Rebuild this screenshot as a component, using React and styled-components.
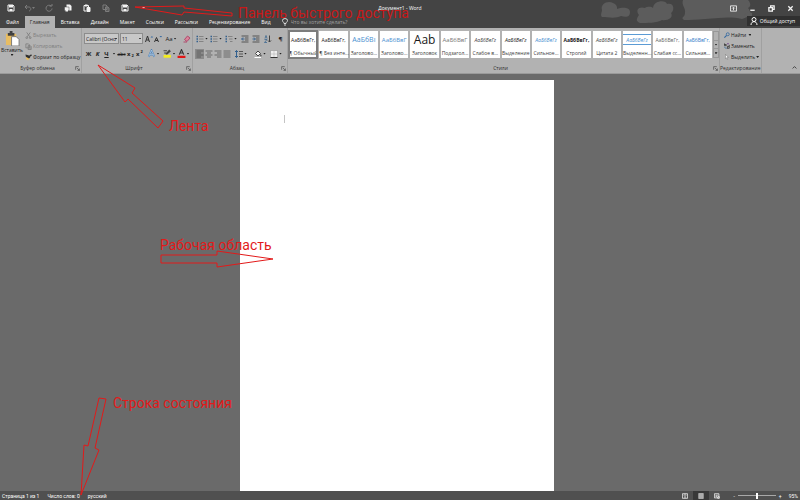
import styled, { createGlobalStyle, css } from "styled-components";

const GlobalStyle = createGlobalStyle`
  * {
    box-sizing: border-box;
  }

  body {
    margin: 0;
    background: #6a6a6a;
    font-family: "Open Sans", "Noto Sans", sans-serif;
    font-size: 5px;
    line-height: 8px;
    color: #202020;
  }

  button, input, select {
    font: inherit;
    color: inherit;
    margin: 0;
    padding: 0;
    border: 0;
    background: none;
  }
`;

const Window = styled.div`
  position: relative;
  display: flex;
  flex-direction: column;
  min-height: 100vh;
  overflow: hidden;
`;

/* Title bar and tabs */

const Header = styled.header`
  position: relative;
  background: #444;
  color: #fff;
`;

const Clouds = styled.svg`
  position: absolute;
  top: 0;
  right: 48px;
  width: 152px;
  height: 28px;
  fill: #5c5c5c;
`;

const TitleBar = styled.div`
  position: relative;
  display: grid;
  grid-template-columns: 1fr auto 1fr;
  align-items: center;
  height: 16px;
`;

const QuickAccess = styled.div`
  display: flex;
  align-items: center;
  padding-left: 1px;
`;

const BarButton = styled.button`
  display: flex;
  align-items: center;
  justify-content: center;
  width: 19px;
  height: 14px;
  color: ${(props) => (props.$dim ? "#7c7c7c" : "#f4f4f4")};
`;

const Title = styled.h1`
  margin: 0;
  font-size: 5px;
  font-weight: normal;
`;

const WindowButtons = styled.div`
  display: flex;
  justify-content: flex-end;
`;

const TabRow = styled.nav`
  position: relative;
  display: flex;
  align-items: stretch;
  gap: 1px;
  height: 12px;
  padding-left: 1px;
`;

const Tab = styled.button`
  padding: 0 5px;
  white-space: nowrap;
  ${(props) =>
    props.$active &&
    css`
      background: #b2b2b2;
      color: #262626;
    `}
`;

const TellMe = styled.label`
  display: flex;
  flex: 1;
  align-items: center;
  gap: 2px;
  padding-left: 4px;

  input {
    flex: 1;
    min-width: 0;
  }

  input::placeholder {
    color: #a0a0a0;
    opacity: 1;
  }
`;

const Share = styled.button`
  display: flex;
  align-items: center;
  gap: 2px;
  height: 10px;
  padding: 0 5px 0 3px;
  background: #303030;
  white-space: nowrap;
`;

/* Ribbon */

const Ribbon = styled.div`
  display: flex;
  height: 46px;
  background: #b2b2b2;
  border-bottom: 1px solid #9a9a9a;
`;

const GroupBox = styled.section`
  display: flex;
  flex-direction: column;
  flex: ${(props) => (props.$width ? `0 0 ${props.$width}px` : "1")};
  min-width: 0;
  padding-top: 3px;
  border-right: 1px solid #a0a0a0;
`;

const GroupBody = styled.div`
  flex: 1;
  display: flex;
  min-height: 0;
`;

const GroupFooter = styled.footer`
  display: flex;
  align-items: center;
  height: 10px;
  padding-right: 1px;
  color: #303030;

  span {
    flex: 1;
    text-align: center;
    white-space: nowrap;
  }
`;

const Launcher = styled.button`
  display: flex;
  width: 5px;
  color: #404040;
`;

const PasteButton = styled.button`
  display: flex;
  flex-direction: column;
  align-items: center;
  width: 24px;
`;

const CommandList = styled.div`
  display: flex;
  flex-direction: column;
  gap: 3px;
  padding-left: ${(props) => props.$indent || 0}px;
`;

const Command = styled.button`
  display: flex;
  align-items: center;
  gap: 1px;
  height: 8px;
  white-space: nowrap;
  color: ${(props) => (props.$dim ? "#808080" : "#202020")};
`;

const Rows = styled.div`
  flex: 1;
  display: flex;
  flex-direction: column;
  gap: 4px;
  padding: 2px 2px 0;
`;

const Row = styled.div`
  display: flex;
  align-items: center;
  height: 11px;
`;

const Select = styled.select`
  appearance: none;
  width: ${(props) => props.$width}px;
  height: 11px;
  padding: 0 1px;
  margin-right: 1px;
  border: 1px solid #8c8c8c;
  background: #c8c8c8
    linear-gradient(#444, #444) no-repeat right 1px center / 2px 1px;
`;

const Tool = styled.button`
  display: flex;
  align-items: center;
  justify-content: center;
  gap: 1px;
  width: ${(props) => props.$width || 9}px;
  height: 10px;
  font-size: ${(props) => props.$size || 6}px;
  font-weight: ${(props) => (props.$bold ? "bold" : "normal")};
  font-style: ${(props) => (props.$italic ? "italic" : "normal")};
  text-decoration: ${(props) => props.$line || "none"};
  background: ${(props) => (props.$on ? "#8a8a8a" : "none")};

  sup, sub {
    font-size: 4px;
    line-height: 0;
  }

  sup {
    padding-bottom: 4px;
  }

  sub {
    padding-top: 4px;
  }
`;

const Caret = styled.i`
  flex: none;
  width: 3px;
  height: 2px;
  background: currentColor;
  clip-path: polygon(0 0, 100% 0, 50% 100%);
`;

const Gallery = styled.div`
  flex: 1;
  display: flex;
  gap: 2px;
  min-width: 0;
  height: 28px;
  padding: 0 1px;
`;

const StyleCard = styled.button`
  flex: 1 1 0;
  display: flex;
  flex-direction: column;
  justify-content: space-between;
  min-width: 0;
  height: 27px;
  padding: 1px 0;
  background: #fff;
  outline: ${(props) => (props.$active ? "2px solid #7c7c7c" : "none")};
  outline-offset: -1px;
`;

const Sample = styled.span`
  display: flex;
  align-items: center;
  justify-content: center;
  width: 100%;
  height: 16px;
  white-space: nowrap;
  font-size: ${(props) => props.$size || 5}px;
  font-weight: ${(props) => props.$weight || 500};
  font-style: ${(props) => (props.$italic ? "italic" : "normal")};
  color: ${(props) => props.$color || "#181818"};
  ${(props) =>
    props.$ruled &&
    css`
      border: solid #5b9bd5;
      border-width: 1px 0;
      height: 11px;
      margin-top: 2px;
    `}
`;

const StyleName = styled.span`
  width: 100%;
  white-space: nowrap;
  text-align: center;
  color: #404040;
`;

const GalleryScroll = styled.div`
  display: flex;
  flex-direction: column;
  width: 6px;
  height: 27px;
  border: 1px solid #989898;

  button {
    flex: 1;
    display: flex;
    align-items: center;
    justify-content: center;
  }

  button + button {
    border-top: 1px solid #989898;
  }
`;

const RibbonEnd = styled.div`
  flex: 0 0 38px;
  display: flex;
  align-items: flex-end;
  justify-content: flex-end;
  padding: 3px;
`;

/* Document */

const Workspace = styled.main`
  flex: 1;
  display: flex;
  justify-content: center;
  padding: 6px 7px 0 0;
  background: #6a6a6a;
`;

const Sheet = styled.article`
  width: 314px;
  padding: 35px 44px;
  background: #fff;
`;

const TextCursor = styled.div`
  width: 1px;
  height: 8px;
  background: #c4c4c4;
`;

/* Status bar */

const StatusBar = styled.footer`
  display: flex;
  align-items: center;
  gap: 8px;
  height: 9px;
  padding: 0 2px;
  background: #505050;
  color: #fff;
  font-family: Roboto, "Liberation Sans", sans-serif;
`;

const ViewButtons = styled.div`
  display: flex;
  margin-left: auto;
`;

const ViewButton = styled.button`
  display: flex;
  align-items: center;
  justify-content: center;
  width: 16px;
  height: 9px;
  background: ${(props) => (props.$on ? "#383838" : "none")};
`;

const Zoom = styled.div`
  display: flex;
  align-items: center;
  gap: 3px;

  input {
    appearance: none;
    width: 38px;
    height: 1px;
    background: #a8a8a8;
  }

  input::-webkit-slider-thumb {
    appearance: none;
    width: 2px;
    height: 6px;
    background: #fff;
  }

  button:last-child {
    padding-left: 4px;
  }
`;

/* Callouts drawn over the window */

const Note = styled.div`
  position: absolute;
  left: ${(props) => props.$x}px;
  top: ${(props) => props.$y}px;
  font-family: Roboto, "Liberation Sans", sans-serif;
  font-size: 14px;
  line-height: 20px;
  white-space: nowrap;
  color: ${(props) => props.$color || "#e21a1a"};
  pointer-events: none;
`;

const Arrows = styled.svg`
  position: absolute;
  top: 0;
  left: 0;
  width: 300px;
  height: 500px;
  fill: none;
  stroke: #e21a1a;
  stroke-width: 1;
  pointer-events: none;
`;

const Svg = styled.svg`
  flex: none;
  width: ${(props) => props.$size}px;
  height: ${(props) => props.$size}px;
  fill: none;
  stroke: currentColor;
  stroke-width: 2;
`;

const Icon = ({ size = 8, children }) => (
  <Svg $size={size} viewBox="0 0 16 16" aria-hidden="true">
    {children}
  </Svg>
);

const SaveIcon = () => (
  <Icon>
    <path d="M2 2h10l2 2v10H2z" />
    <path d="M4 2h8v5H4zM5 10h6v4H5z" fill="currentColor" stroke="none" />
  </Icon>
);

const UndoIcon = () => (
  <Icon>
    <path d="M6 2L2 6l4 4M2 6h7c6 0 6 7 1 8" />
  </Icon>
);

const RedoIcon = () => (
  <Icon>
    <path d="M12 4a6 6 0 1 0 2 5M9 4h5V0" />
  </Icon>
);

const PrintIcon = () => (
  <Icon>
    <path d="M5 1h7l3 3v9H5z" fill="currentColor" stroke="none" />
    <path d="M1 6h9v7H1z" fill="currentColor" stroke="#444" strokeWidth="1" />
    <path d="M3 12h5v3H3z" fill="currentColor" stroke="none" />
  </Icon>
);

const ClipboardIcon = () => (
  <Icon>
    <path d="M7 14H2V3h9v3" />
    <path d="M4 1h5v4H4z" fill="currentColor" stroke="none" />
    <path d="M8 7h6v8H8z" fill="currentColor" />
  </Icon>
);

const CopyIcon = ({ size }) => (
  <Icon size={size}>
    <path d="M2 2h6l2 2v7H2z" />
    <path d="M7 6h5l2 2v7H7z" fill="currentColor" fillOpacity="0.4" />
  </Icon>
);

const PasteIcon = () => (
  <Icon size={15}>
    <path d="M1 3h11v12H1z" fill="#e8bd62" stroke="none" />
    <path d="M3 2h2V0h3v2h2v3H3z" fill="#404040" stroke="none" />
    <path d="M7 6h5l3 3v7H7z" fill="#fff" stroke="#777" strokeWidth="1" />
  </Icon>
);

const CutIcon = () => (
  <Icon size={7}>
    <path d="M4 1l7 10M12 1L5 11" />
    <circle cx="4" cy="13" r="2" />
    <circle cx="12" cy="13" r="2" />
  </Icon>
);

const BrushIcon = () => (
  <Icon size={7}>
    <path d="M4 5l7 4-4 6-5-4z" fill="#e8bd62" stroke="none" />
    <path d="M1 1l7 2 4 5-3 2-7-4z" fill="#303030" stroke="none" />
    <path d="M9 6l6-4" stroke="#303030" strokeWidth="3" />
  </Icon>
);

const EraserIcon = () => (
  <Icon>
    <path d="M3 9l6-7 5 4-6 7z" fill="#d8849a" stroke="#b04a6c" />
    <path d="M1 14h7" stroke="#b04a6c" />
  </Icon>
);

const ListIcon = ({ step = 0 }) => (
  <Icon>
    <path d="M1 3h3M1 8h3M1 13h3" stroke="#34618e" strokeWidth="3" />
    <path
      d={`M6 3h9M${6 + step} 8h${9 - step}M${6 + step * 2} 13h${9 - step * 2}`}
      stroke="#555"
      strokeWidth="1"
    />
  </Icon>
);

const IndentIcon = ({ flip }) => (
  <Icon>
    <path d="M1 2h14M8 6h7M8 10h7M1 14h14" stroke="#555" />
    <path d={flip ? "M1 8h5M4 5l3 3-3 3" : "M7 8H2M4 5L1 8l3 3"} stroke="#34618e" />
  </Icon>
);

const SortIcon = () => (
  <Icon>
    <path d="M2 7l2-6 2 6M1 9h5l-5 6h5" stroke="#34618e" strokeWidth="1.5" />
    <path d="M11 1v13M8 11l3 3 3-3" stroke="#444" />
  </Icon>
);

const lines = {
  left: "M1 2h14M1 6h9M1 10h14M1 14h9",
  center: "M1 2h14M4 6h8M1 10h14M4 14h8",
  right: "M1 2h14M6 6h9M1 10h14M6 14h9",
  justify: "M1 2h14M1 6h14M1 10h14M1 14h14",
};

const AlignIcon = ({ kind }) => (
  <Icon>
    <path d={lines[kind]} stroke="#505050" strokeWidth="1.5" />
  </Icon>
);

const SpacingIcon = () => (
  <Icon>
    <path d="M3 1v14M0 4l3-3 3 3M0 12l3 3 3-3" stroke="#34618e" />
    <path d="M8 3h8M8 8h8M8 13h8" stroke="#555" />
  </Icon>
);

const FillIcon = () => (
  <Icon>
    <path d="M3 7l5-5 5 5-5 5z" fill="#f4f4f4" stroke="#444" />
    <path d="M13 8c3 3 2 5 1 5s-2-2-1-5" fill="#303030" stroke="none" />
    <path d="M1 15h13" stroke="#fff" />
  </Icon>
);

const BorderIcon = () => (
  <Icon>
    <path d="M1 1h14v14H1z" fill="#eee" stroke="#888" strokeWidth="1" />
    <path d="M8 1v14M1 8h14" stroke="#aaa" strokeWidth="1" />
    <path d="M1 15h14" stroke="#333" />
  </Icon>
);

const MarkerIcon = () => (
  <Icon size={9}>
    <path d="M4 9l7-8 3 3-7 6z" fill="#444" stroke="none" />
    <path d="M1 3h6M2 7h4" stroke="#444" />
    <path d="M1 13h13" stroke="#f4ec20" strokeWidth="5" />
  </Icon>
);

const FontColorIcon = () => (
  <Icon size={9}>
    <path d="M4 10l4-9 4 9M5 7h6" stroke="#333" />
    <path d="M1 14h14" stroke="#e01414" strokeWidth="4" />
  </Icon>
);

const TextEffectIcon = () => (
  <Icon size={9}>
    <path d="M3 14L8 2l5 12M5 10h6" stroke="#4a7fb5" strokeWidth="3" />
    <path d="M3 14L8 2l5 12M5 10h6" stroke="#d2e2f2" strokeWidth="1" />
  </Icon>
);

const GrowIcon = ({ down }) => (
  <Icon>
    <path d={down ? "M1 14l4-9 4 9M3 11h5" : "M1 14L5 2l4 12M3 10h5"} stroke="#303030" />
    <path d={down ? "M11 2h5l-2 3z" : "M11 5h5l-2-3z"} fill="#2f66a0" stroke="none" />
  </Icon>
);

const SearchIcon = () => (
  <Icon size={6}>
    <circle cx="10" cy="6" r="4" stroke="#2f66a0" />
    <path d="M7 9l-6 6" stroke="#2f66a0" strokeWidth="3" />
  </Icon>
);

const ReplaceIcon = () => (
  <Icon size={6}>
    <path d="M1 1v6h5V4H1M9 15v-6h5v5H9M14 9V5" stroke="#303030" />
    <path d="M2 10c0 4 2 4 5 4" stroke="#2f66a0" />
    <path d="M8 2h5" stroke="#7a4a90" strokeWidth="3" />
  </Icon>
);

const PointerIcon = () => (
  <Icon size={6}>
    <path d="M4 1l8 8H8l2 5-2 1-2-5-2 2z" fill="#fff" stroke="#555" strokeWidth="1" />
  </Icon>
);

const BulbIcon = () => (
  <Icon>
    <path d="M6 11c0-3-3-3-3-6a5 4 0 0 1 10 0c0 3-3 3-3 6zM6 14h4" strokeWidth="1.5" />
  </Icon>
);

const PersonIcon = () => (
  <Icon>
    <circle cx="8" cy="5" r="4" />
    <path d="M2 16c0-9 12-9 12 0" />
  </Icon>
);

const LauncherIcon = () => (
  <Icon size={5}>
    <path d="M2 12V2h10M6 6l8 8M14 8v6H8" />
  </Icon>
);

const tabs = ["Файл", "Главная", "Вставка", "Дизайн", "Макет", "Ссылки", "Рассылки", "Рецензирование", "Вид"];

const textStyles = [
  { name: "¶ Обычный", sample: "АаБбВвГг,", active: true },
  { name: "¶ Без инте...", sample: "АаБбВвГг," },
  { name: "Заголово...", sample: "АаБбВı", size: 7, weight: 400, color: "#4a90d0" },
  { name: "Заголово...", sample: "АаБбВвГ", size: 6, weight: 400, color: "#4a90d0" },
  { name: "Заголовок", sample: "Ааb", size: 12, weight: 400 },
  { name: "Подзагол...", sample: "АаБбВвГ", size: 6, color: "#777" },
  { name: "Слабое в...", sample: "АаБбВвГг", italic: true, color: "#444" },
  { name: "Выделение", sample: "АаБбВвГг", italic: true },
  { name: "Сильное...", sample: "АаБбВвГг", italic: true, color: "#4a90d0" },
  { name: "Строгий", sample: "АаБбВвГг,", weight: 700 },
  { name: "Цитата 2", sample: "АаБбВвГг", italic: true, color: "#444" },
  { name: "Выделенн...", sample: "АаБбВвГг", italic: true, color: "#4a90d0", ruled: true },
  { name: "Слабая сс...", sample: "АаБбВвГг,", color: "#666" },
  { name: "Сильная...", sample: "АаБбВвГг,", color: "#2f7cc8" },
];

const Group = ({ title, width, launcher = true, children }) => (
  <GroupBox $width={width}>
    <GroupBody>{children}</GroupBody>
    <GroupFooter>
      <span>{title}</span>
      {launcher && (
        <Launcher aria-label={title}>
          <LauncherIcon />
        </Launcher>
      )}
    </GroupFooter>
  </GroupBox>
);

const App = () => {
  return (
    <>
      <GlobalStyle />
      <Window>
        <Header>
          <Clouds viewBox="0 0 152 28" aria-hidden="true">
            <path d="M2 17C0 15 2 12 2 10C0 4 8 0 13 3C18 5 17 9 17 9C22 7 30 7 30 12C30 18 25 17 21 16C15 19 8 17 2 17z" />
            <path d="M40 23C35 21 37 18 39 15C35 10 39 6 45 8C48 6 52 7 53 8C54 0 66 0 67 4C74 2 75 10 71 13C74 18 67 21 62 20C57 23 47 23 40 23z" />
            <path d="M83 0C81 5 86 8 85 13C85 18 80 17 84 20C104 21 124 15 142 19C150 17 152 12 148 8C152 6 150 2 148 0z" />
            <path d="M144 16c3-6 8-3 8-3v3z" />
          </Clouds>
          <TitleBar>
            <QuickAccess>
              <BarButton aria-label="Сохранить"><SaveIcon /></BarButton>
              <BarButton $dim aria-label="Отменить"><UndoIcon /><Caret /></BarButton>
              <BarButton $dim aria-label="Повторить"><RedoIcon /></BarButton>
              <BarButton aria-label="Печать"><PrintIcon /></BarButton>
              <BarButton aria-label="Вставить"><ClipboardIcon /></BarButton>
              <BarButton $dim aria-label="Копировать"><CopyIcon /></BarButton>
              <BarButton aria-label="Сохранить как"><SaveIcon /></BarButton>
              <BarButton aria-label="Настройка панели"><Caret /></BarButton>
            </QuickAccess>
            <Title>Документ1 - Word</Title>
            <WindowButtons>
              <BarButton aria-label="Параметры ленты">
                <Icon size={7}><path d="M1 2h14v12H1zM8 12V6M5 8l3-3 3 3" /></Icon>
              </BarButton>
              <BarButton aria-label="Свернуть">
                <Icon size={7}><path d="M3 12h10" strokeWidth="3" /></Icon>
              </BarButton>
              <BarButton aria-label="Восстановить">
                <Icon size={7}><path d="M2 6h8v8H2zM6 5V2h8v8h-3" strokeWidth="3" /></Icon>
              </BarButton>
              <BarButton aria-label="Закрыть">
                <Icon size={7}><path d="M3 3l10 10M13 3L3 13" strokeWidth="3" /></Icon>
              </BarButton>
            </WindowButtons>
          </TitleBar>
          <TabRow>
            {tabs.map((tab) => (
              <Tab key={tab} $active={tab === "Главная"}>{tab}</Tab>
            ))}
            <TellMe>
              <BulbIcon />
              <input aria-label="Помощник" placeholder="Что вы хотите сделать?" />
            </TellMe>
            <Share><PersonIcon />Общий доступ</Share>
          </TabRow>
        </Header>

        <Ribbon>
          <Group title="Буфер обмена" width={82}>
            <PasteButton>
              <PasteIcon />
              Вставить
              <Caret />
            </PasteButton>
            <CommandList $indent={1}>
              <Command $dim><CutIcon />Вырезать</Command>
              <Command $dim><CopyIcon size={7} />Копировать</Command>
              <Command><BrushIcon />Формат по образцу</Command>
            </CommandList>
          </Group>

          <Group title="Шрифт" width={111}>
            <Rows>
              <Row>
                <Select $width={35} aria-label="Шрифт"><option>Calibri (Осно</option></Select>
                <Select $width={23} aria-label="Размер"><option>11</option></Select>
                <Tool aria-label="Увеличить шрифт"><GrowIcon /></Tool>
                <Tool aria-label="Уменьшить шрифт"><GrowIcon down /></Tool>
                <Tool $width={18}>Aa<Caret /></Tool>
                <Tool $width={14} aria-label="Очистить"><EraserIcon /></Tool>
              </Row>
              <Row>
                <Tool $bold>Ж</Tool>
                <Tool $bold $italic>К</Tool>
                <Tool $bold $line="underline">Ч</Tool>
                <Tool $width={6} aria-label="Вид подчеркивания"><Caret /></Tool>
                <Tool $size={5} $line="line-through">abc</Tool>
                <Tool $bold>x<sub>2</sub></Tool>
                <Tool $bold>x<sup>2</sup></Tool>
                <Tool $width={18} aria-label="Эффекты"><TextEffectIcon /><Caret /></Tool>
                <Tool $width={14} aria-label="Выделение цветом"><MarkerIcon /><Caret /></Tool>
                <Tool $width={14} aria-label="Цвет текста"><FontColorIcon /><Caret /></Tool>
              </Row>
            </Rows>
          </Group>

          <Group title="Абзац" width={95}>
            <Rows>
              <Row>
                <Tool $width={14} aria-label="Маркеры"><ListIcon /><Caret /></Tool>
                <Tool $width={14} aria-label="Нумерация"><ListIcon /><Caret /></Tool>
                <Tool $width={16} aria-label="Многоуровневый список"><ListIcon step={2} /><Caret /></Tool>
                <Tool $width={12} aria-label="Уменьшить отступ"><IndentIcon /></Tool>
                <Tool aria-label="Увеличить отступ"><IndentIcon flip /></Tool>
                <Tool $width={16} aria-label="Сортировка"><SortIcon /></Tool>
                <Tool $bold>¶</Tool>
              </Row>
              <Row>
                <Tool $on aria-label="По левому краю"><AlignIcon kind="left" /></Tool>
                <Tool aria-label="По центру"><AlignIcon kind="center" /></Tool>
                <Tool aria-label="По правому краю"><AlignIcon kind="right" /></Tool>
                <Tool aria-label="По ширине"><AlignIcon kind="justify" /></Tool>
                <Tool $width={20} aria-label="Интервал"><SpacingIcon /><Caret /></Tool>
                <Tool $width={18} aria-label="Заливка"><FillIcon /><Caret /></Tool>
                <Tool $width={14} aria-label="Границы"><BorderIcon /><Caret /></Tool>
              </Row>
            </Rows>
          </Group>

          <Group title="Стили">
            <Gallery>
              {textStyles.map((item, index) => (
                <StyleCard key={index} $active={item.active}>
                  <Sample
                    $size={item.size}
                    $color={item.color}
                    $weight={item.weight}
                    $italic={item.italic}
                    $ruled={item.ruled}
                  >
                    {item.sample}
                  </Sample>
                  <StyleName>{item.name}</StyleName>
                </StyleCard>
              ))}
            </Gallery>
            <GalleryScroll>
              <button aria-label="Вверх" />
              <button aria-label="Вниз"><Caret /></button>
              <button aria-label="Все стили"><Caret /></button>
            </GalleryScroll>
          </Group>

          <Group title="Редактирование" width={42} launcher={false}>
            <CommandList $indent={4}>
              <Command><SearchIcon />Найти&nbsp;<Caret /></Command>
              <Command><ReplaceIcon />Заменить</Command>
              <Command><PointerIcon />Выделить<Caret /></Command>
            </CommandList>
          </Group>
          <RibbonEnd>
            <Launcher aria-label="Свернуть ленту">
              <Icon size={5}><path d="M2 11l6-6 6 6" strokeWidth="3" /></Icon>
            </Launcher>
          </RibbonEnd>
        </Ribbon>

        <Workspace>
          <Sheet>
            <TextCursor />
          </Sheet>
        </Workspace>

        <StatusBar>
          <span>Страница 1 из 1</span>
          <span>Число слов: 0</span>
          <span>русский</span>
          <ViewButtons>
            <ViewButton aria-label="Режим чтения">
              <Icon size={6}><path d="M1 2h14v12H1zM8 2v12M4 6h1M11 6h1" /></Icon>
            </ViewButton>
            <ViewButton $on aria-label="Разметка страницы">
              <Icon size={6}><path d="M2 1h12v14H2z" fill="#aaa" stroke="#bbb" /></Icon>
            </ViewButton>
            <ViewButton aria-label="Веб-документ">
              <Icon size={6}><path d="M1 2h12v11H1zM4 6h6M4 9h4" /><circle cx="12" cy="12" r="3" /></Icon>
            </ViewButton>
          </ViewButtons>
          <Zoom>
            <button aria-label="Уменьшить">-</button>
            <input type="range" aria-label="Масштаб" min="10" max="180" defaultValue="95" />
            <button aria-label="Увеличить">+</button>
            <button>95%</button>
          </Zoom>
        </StatusBar>

        <Arrows viewBox="0 0 300 500" aria-hidden="true">
          <path d="M135 7L184 6V8L232 13V16L184 12L182 15z" />
          <path d="M98 65L135 88L132 93L163 121L158 128L128 99L125 102z" />
          <path d="M161 255H217V251L273 259L217 267V263H161z" />
          <path d="M99 398L106 399L95 448L99 450L81 495L84 445L88 446z" />
        </Arrows>
        <Note $x={238} $y={3} $color="#c81818">Панель быстрого доступа</Note>
        <Note $x={169} $y={116}>Лента</Note>
        <Note $x={160} $y={235}>Рабочая область</Note>
        <Note $x={113} $y={393}>Строка состояния</Note>
      </Window>
    </>
  );
};

export default App;
